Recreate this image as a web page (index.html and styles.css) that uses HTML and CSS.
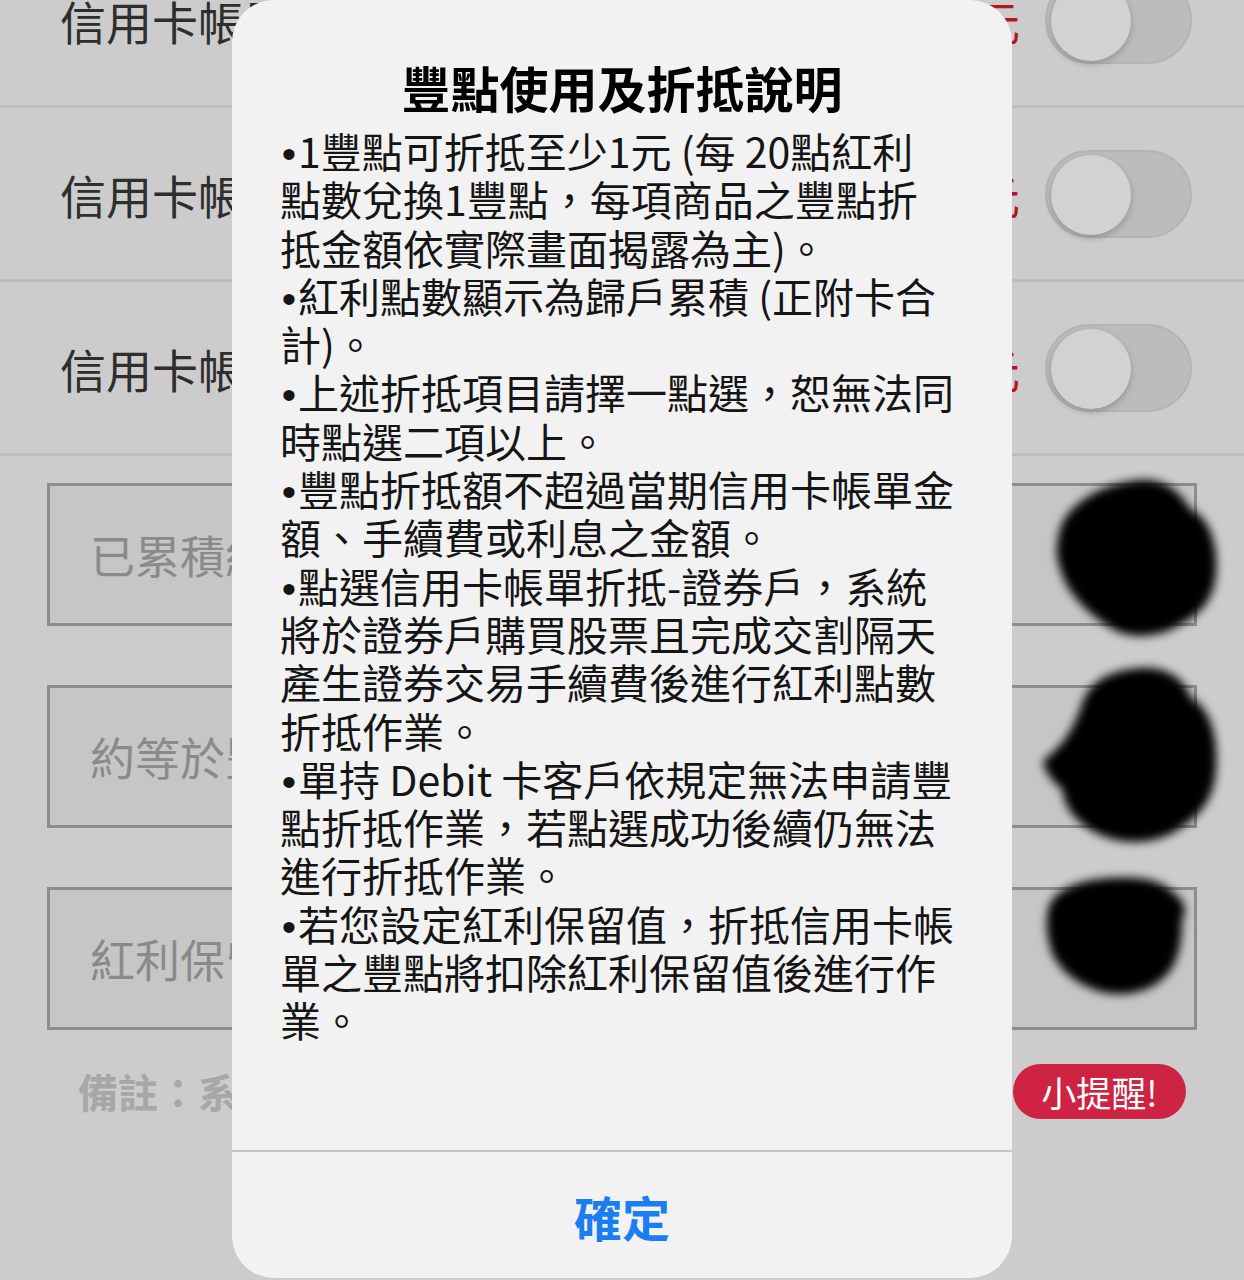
FILE: index.html
```html
<!DOCTYPE html>
<html lang="zh-Hant">
<head>
    <meta charset="UTF-8">
    <meta name="viewport" content="width=device-width, initial-scale=1.0">
    <title>豐點折抵</title>
    <link rel="stylesheet" href="styles.css">
</head>
<body>

    <!-- Page under the alert (dimmed) -->
    <div class="page">
        <div class="row">
            <span class="row-label">信用卡帳單折抵</span>
            <span class="row-value">0元</span>
            <span class="toggle"><span class="knob"></span></span>
        </div>
        <div class="row">
            <span class="row-label">信用卡帳單折抵</span>
            <span class="row-value">0元</span>
            <span class="toggle"><span class="knob"></span></span>
        </div>
        <div class="row">
            <span class="row-label">信用卡帳單折抵</span>
            <span class="row-value">0元</span>
            <span class="toggle"><span class="knob"></span></span>
        </div>

        <div class="fields">
            <div class="field">已累積紅利點數</div>
            <div class="field">約等於豐點</div>
            <div class="field">紅利保留值</div>
        </div>

        <div class="note-row">
            <span class="note">備註：系統將自動計算</span>
            <span class="pill">小提醒!</span>
        </div>
    </div>

    <!-- Redaction scribbles -->
    <svg class="scribbles" width="214" height="540" viewBox="0 0 214 540">
        <defs>
            <filter id="soft" x="-20%" y="-20%" width="140%" height="140%">
                <feGaussianBlur stdDeviation="5"/>
            </filter>
        </defs>
        <g fill="#000" stroke="#000" stroke-width="8" stroke-linejoin="round" filter="url(#soft)">
            <path d="M32 70 C34 40 70 18 110 14 C135 12 150 28 157 42 C178 50 184 80 182 104 C180 128 168 140 150 150 C130 164 100 166 82 154 C60 140 40 120 35 100 C30 88 30 80 32 70 Z"/>
            <path d="M120 40 C150 42 176 62 180 92 C182 120 170 140 150 150 L120 120 Z" opacity="0.6"/>
            <path d="M17 293 C30 282 45 270 57 232 C65 212 84 204 110 202 C135 200 152 212 157 230 C178 240 184 270 182 300 C180 330 165 345 140 360 C115 372 85 370 62 356 C44 344 36 330 37 318 C28 312 20 302 17 293 Z"/>
            <path d="M22 440 C26 424 48 414 80 412 C110 410 130 414 140 425 C150 432 154 440 148 448 C148 470 146 492 130 506 C114 520 88 524 66 516 C44 508 28 492 24 476 C20 462 20 450 22 440 Z"/>
        </g>
    </svg>

    <!-- Alert -->
    <div class="alert">
        <div class="alert-title">豐點使用及折抵說明</div>
        <div class="alert-body">
            <p><span class="dot">•</span>1豐點可折抵至少1元 (每 20點紅利<br>點數兌換1豐點，每項商品之豐點折<br>抵金額依實際畫面揭露為主)。</p>
            <p><span class="dot">•</span>紅利點數顯示為歸戶累積 (正附卡合<br>計)。</p>
            <p><span class="dot">•</span>上述折抵項目請擇一點選，恕無法同<br>時點選二項以上。</p>
            <p><span class="dot">•</span>豐點折抵額不超過當期信用卡帳單金<br>額、手續費或利息之金額。</p>
            <p><span class="dot">•</span>點選信用卡帳單折抵-證券戶，系統<br>將於證券戶購買股票且完成交割隔天<br>產生證券交易手續費後進行紅利點數<br>折抵作業。</p>
            <p><span class="dot">•</span>單持 Debit 卡客戶依規定無法申請豐<br>點折抵作業，若點選成功後續仍無法<br>進行折抵作業。</p>
            <p><span class="dot">•</span>若您設定紅利保留值，折抵信用卡帳<br>單之豐點將扣除紅利保留值後進行作<br>業。</p>
        </div>
        <div class="alert-action">確定</div>
    </div>

</body>
</html>
```

FILE: styles.css
```css
body {
    margin: 0;
    height: 1280px;
    overflow: hidden;
    position: relative;
    background-color: #cccccc;
    font-family: "Noto Sans CJK TC", "Noto Sans", sans-serif;
}

.page {
    margin-top: -66px;
}

.row {
    height: 171px;
    display: flex;
    align-items: center;
    padding: 0 52px 0 60px;
    border-bottom: 3px solid #bdbdbd;
}

.row-label {
    flex: 1;
    font-size: 46px;
    color: #2e2e2e;
    white-space: nowrap;
}

.row-value {
    font-size: 46px;
    color: #b3141d;
    margin-right: 25px;
}

.toggle {
    width: 147px;
    height: 88px;
    box-sizing: border-box;
    border-radius: 44px;
    background-color: #bcbcbc;
    border: 2px solid #b4b4b4;
    padding: 3px 4px;
}

.knob {
    display: block;
    width: 80px;
    height: 80px;
    border-radius: 50%;
    background-color: #d2d2d2;
    box-shadow: 0px 3px 7px rgba(0, 0, 0, 0.22);
}

.fields {
    display: flex;
    flex-direction: column;
    gap: 59px;
    padding: 27px 47px 0;
}

.field {
    height: 143px;
    box-sizing: border-box;
    display: flex;
    align-items: center;
    padding-left: 40px;
    border: 3px solid #8d8d8d;
    background-color: #c6c6c6;
    font-size: 45px;
    color: #8a8a8a;
    white-space: nowrap;
}

.note-row {
    display: flex;
    align-items: center;
    justify-content: space-between;
    margin-top: 32px;
    padding: 0 58px 0 78px;
}

.note {
    font-size: 40px;
    font-weight: bold;
    color: #a7a7a7;
}

.pill {
    width: 173px;
    height: 55px;
    display: flex;
    align-items: center;
    justify-content: center;
    border-radius: 28px;
    background-color: #cf2344;
    color: #fff;
    font-size: 35px;
}

.scribbles {
    position: absolute;
    left: 1030px;
    top: 470px;
}

.alert {
    position: absolute;
    left: 232px;
    top: 0;
    width: 780px;
    height: 1278px;
    display: flex;
    flex-direction: column;
    border-radius: 42px;
    background-color: #f2f2f2;
}

.alert-title {
    margin-top: 58px;
    font-size: 49px;
    line-height: 58px;
    font-weight: bold;
    text-align: center;
    color: #000;
}

.alert-body {
    flex: 1;
    padding: 10px 0 0 48px;
    font-size: 41px;
    line-height: 48.3px;
    color: #151515;
    white-space: nowrap;
}

.alert-body p {
    margin: 0;
}

.dot {
    display: inline-block;
    width: 18px;
    line-height: 0;
    text-align: center;
    font-family: "Liberation Sans", sans-serif;
}

.alert-action {
    height: 124px;
    display: flex;
    align-items: center;
    justify-content: center;
    padding-top: 2px;
    border-top: 2px solid #c6c6c6;
    font-size: 48px;
    font-weight: bold;
    color: #1a7ef2;
}
```
